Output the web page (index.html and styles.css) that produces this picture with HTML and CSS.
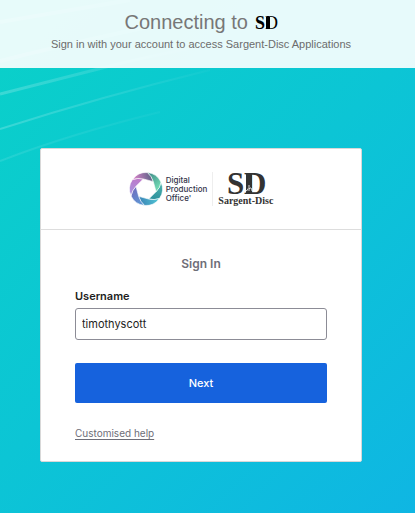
FILE: index.html
```html
<!DOCTYPE html>
<html lang="en">
<head>
  <meta charset="UTF-8">
  <meta name="viewport" content="width=device-width, initial-scale=1.0">
  <title>Sargent-Disc - Sign In</title>
  <link rel="stylesheet" href="styles.css">
</head>
<body>
  <svg class="streaks" viewBox="0 0 415 200" width="415" height="200" aria-hidden="true">
    <defs>
      <linearGradient id="fade" gradientUnits="userSpaceOnUse" x1="0" y1="0" x2="240" y2="0">
        <stop offset="0" stop-color="#fff" stop-opacity=".2"/>
        <stop offset="1" stop-color="#fff" stop-opacity="0"/>
      </linearGradient>
    </defs>
    <g fill="none" stroke="url(#fade)">
      <path d="M0 22L130 0" stroke-width="4"/>
      <path d="M0 61Q130 28 290 0" stroke-width="4"/>
      <path d="M0 94Q55 80 110 66T290 30" stroke-width="3"/>
      <path d="M0 129Q100 97 210 70" stroke-width="2"/>
      <path d="M0 161Q70 134 160 112" stroke-width="2" opacity=".5"/>
    </g>
  </svg>

  <header class="banner">
    <h1>Connecting to
      <svg class="app-logo" viewBox="0 0 22 14" width="22" height="14" role="img" aria-label="SD">
        <text x="0" y="13" class="mono-s">S</text>
        <rect x="11" y="1" width="4" height="12"/>
        <text x="10" y="13" class="mono-d">D</text>
      </svg>
    </h1>
    <p>Sign in with your account to access Sargent-Disc Applications</p>
  </header>

  <main class="card">
    <div class="logos">
      <svg viewBox="-17 -17 34 34" width="34" height="34" aria-hidden="true">
        <defs>
          <linearGradient id="b1" x1="0" y1="0" x2="0" y2="1"><stop offset="0" stop-color="#4fb5ae"/><stop offset="1" stop-color="#2b8f9c"/></linearGradient>
          <linearGradient id="b2" x1="0" y1="0" x2="0" y2="1"><stop offset="0" stop-color="#52cbd6"/><stop offset="1" stop-color="#3c86b8"/></linearGradient>
          <linearGradient id="b3" x1="0" y1="0" x2="0" y2="1"><stop offset="0" stop-color="#5a9fd8"/><stop offset="1" stop-color="#6f6fc0"/></linearGradient>
          <linearGradient id="b4" x1="0" y1="0" x2="0" y2="1"><stop offset="0" stop-color="#a596e2"/><stop offset="1" stop-color="#bf78c8"/></linearGradient>
          <linearGradient id="b5" x1="0" y1="0" x2="0" y2="1"><stop offset="0" stop-color="#e286d0"/><stop offset="1" stop-color="#5c6285"/></linearGradient>
          <linearGradient id="b6" x1="0" y1="0" x2="0" y2="1"><stop offset="0" stop-color="#3c8585"/><stop offset="1" stop-color="#74dfb6"/></linearGradient>
          <path id="blade" d="M10.4 0Q13 -5 12.7 -10.5A16.5 16.5 0 0 1 15.5 5.7Q11 9.3 5.2 9Z"/>
        </defs>
        <g stroke="#fff" stroke-width=".6" transform="rotate(15)">
          <use href="#blade" fill="url(#b1)"/>
          <use href="#blade" fill="url(#b2)" transform="rotate(60)"/>
          <use href="#blade" fill="url(#b3)" transform="rotate(120)"/>
          <use href="#blade" fill="url(#b4)" transform="rotate(180)"/>
          <use href="#blade" fill="url(#b5)" transform="rotate(240)"/>
          <use href="#blade" fill="url(#b6)" transform="rotate(300)"/>
        </g>
      </svg>
      <div class="dpo-name">Digital<br>Production<br>Office'</div>
      <div class="sargent">
        <svg viewBox="0 0 36 24" width="36" height="24" role="img" aria-label="SD">
          <text x="-1" y="22" class="mono-s mono-big">S</text>
          <rect x="18" y="1" width="6" height="21"/>
          <text x="16" y="22" class="mono-d mono-big">D</text>
          <path d="M17 19Q20 19 20 16.5M21 19V13M21 17Q23.5 14 24 19" fill="none" stroke="#fff" stroke-width=".8"/>
        </svg>
        <span>Sargent-Disc</span>
      </div>
    </div>

    <form class="signin">
      <h2>Sign In</h2>
      <label for="username">Username</label>
      <input type="text" id="username" name="username" value="timothyscott">
      <button type="submit">Next</button>
      <a href="#help">Customised help</a>
    </form>
  </main>
</body>
</html>
```
FILE: styles.css
```css
* {
  box-sizing: border-box;
}
body {
  margin: 0;
  min-height: 100vh;
  position: relative;
  font-family: Inter, sans-serif;
  background: linear-gradient(135deg, #0ad1c8, #0cc5d5 50%, #0fb6e3);
}
.streaks {
  position: absolute;
  top: 0;
  left: 0;
}
.banner {
  position: relative;
  height: 68px;
  padding: 10px 13px 0 0;
  text-align: center;
  font-family: "Liberation Sans", Arial, sans-serif;
  color: #777;
  background: rgba(255, 255, 255, .9);
}
.banner h1 {
  margin: 0;
  font-size: 20px;
  font-weight: 400;
  line-height: 24px;
}
.banner p {
  margin: 2px 0 0;
  font-size: 11px;
  line-height: 16px;
  color: #6c6c6c;
}
.app-logo {
  margin-left: 2px;
  vertical-align: -1px;
  overflow: visible;
  color: #000;
}
.mono-s,
.mono-d {
  font-family: "Liberation Serif", serif;
  font-size: 18px;
}
.mono-s {
  font-weight: 700;
}
.mono-big {
  font-size: 31px;
}
.card {
  position: relative;
  margin: 80px 53px 51px 40px;
  background: #fff;
  border: 1px solid #d8d8d8;
  border-radius: 2px;
}
.logos {
  display: flex;
  justify-content: center;
  align-items: center;
  height: 81px;
  border-bottom: 1px solid #ddd;
}
.dpo-name {
  margin-left: 3px;
  padding-right: 5px;
  font-size: 8px;
  font-weight: 500;
  line-height: 9px;
  color: #33334a;
}
.sargent {
  display: flex;
  flex-direction: column;
  align-items: center;
  padding-left: 5px;
  border-left: 1px solid #eee;
  font: 700 10px/10px "Liberation Serif", serif;
  color: #333;
}
.sargent svg {
  overflow: visible;
  fill: #333;
}
.signin {
  display: flex;
  flex-direction: column;
  padding: 24px 34px 21px;
}
.signin h2 {
  margin: 0 0 15px;
  font-size: 12px;
  font-weight: 600;
  line-height: 20px;
  text-align: center;
  color: #6e6e78;
}
.signin label {
  margin-bottom: 5px;
  font-size: 11px;
  font-weight: 600;
  line-height: 14px;
  color: #1d1d21;
}
.signin input {
  height: 32px;
  padding: 0 6px;
  font: 11px Inter, sans-serif;
  color: #1d1d21;
  background: #fff;
  border: 1px solid #8c8c96;
  border-radius: 3px;
}
.signin button {
  height: 40px;
  margin: 23px 0;
  font: 500 11px Inter, sans-serif;
  color: #fff;
  background: #1662dd;
  border: 0;
  border-radius: 2px;
  cursor: pointer;
}
.signin a {
  align-self: flex-start;
  font-size: 10px;
  line-height: 14px;
  color: #6e6e78;
  text-underline-offset: 2px;
}
```
